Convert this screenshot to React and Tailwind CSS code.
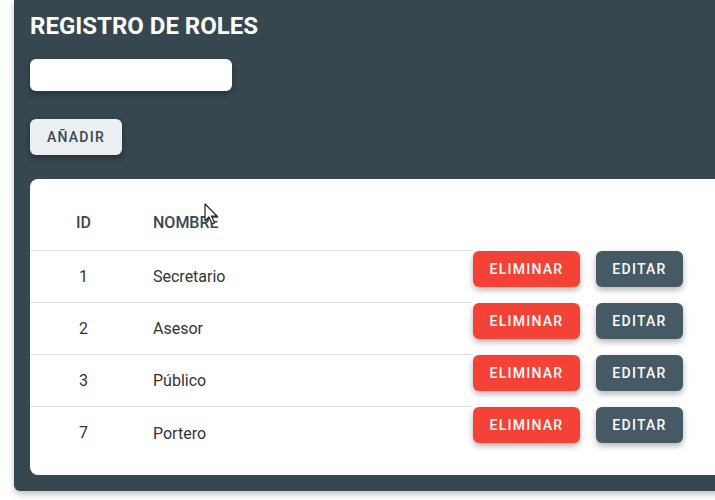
import React from "react";

const roles = [
  { id: 1, nombre: "Secretario" },
  { id: 2, nombre: "Asesor" },
  { id: 3, nombre: "Público" },
  { id: 7, nombre: "Portero" },
];

function Cursor() {
  return (
    <svg
      className="absolute left-[204px] top-[203px]"
      width="16"
      height="24"
      viewBox="0 0 16 24"
    >
      <path
        d="M1 1 L1 18 L5 14 L8 21 L10.5 20 L7.5 13 L13 13 Z"
        fill="#fff"
        stroke="#222"
        strokeWidth="1.2"
        strokeLinejoin="round"
      />
    </svg>
  );
}

function App() {
  return (
    <div className="relative w-[715px] h-[500px] overflow-hidden bg-white font-['Roboto',sans-serif]">
      <div className="ml-[14px] w-[760px] bg-[#37474f] rounded-bl-md shadow-[0_3px_6px_rgba(0,0,0,0.25)] pl-4 pt-[14px] pb-4">
        <h1 className="text-white font-bold text-[24px] leading-[24px]">
          REGISTRO DE ROLES
        </h1>
        <input
          type="text"
          className="mt-[21px] block w-[202px] h-8 rounded-md bg-white shadow-[0_3px_6px_rgba(0,0,0,0.3)] outline-none px-2"
        />
        <button className="mt-7 h-9 px-[17px] rounded-md bg-[#eceff1] text-[#37474f] text-sm font-medium tracking-[1.25px] shadow-[0_3px_6px_rgba(0,0,0,0.35)]">
          AÑADIR
        </button>
        <div className="mt-6 bg-white rounded-l-lg pt-4 pb-4">
          <div className="flex h-[56px] items-center border-b border-[#e0e0e0] w-[442px] text-[#37474f] text-base font-medium">
            <div className="w-[107px] text-center">ID</div>
            <div className="pl-4">NOMBRE</div>
          </div>
          {roles.map((r, i) => (
            <div key={r.id} className="flex h-[52px]">
              <div
                className={
                  "flex items-center w-[442px] text-[#333] text-base " +
                  (i < roles.length - 1 ? "border-b border-[#e0e0e0]" : "")
                }
              >
                <div className="w-[107px] text-center">{r.id}</div>
                <div className="pl-4 pt-[1px]">{r.nombre}</div>
              </div>
              <div className="flex gap-4 pl-[1px]">
                <button className="h-9 w-[107px] rounded-md bg-[#f44336] text-white text-sm font-medium tracking-[1.25px] shadow-[0_3px_6px_rgba(0,0,0,0.3)]">
                  ELIMINAR
                </button>
                <button className="h-9 w-[87px] rounded-md bg-[#455a64] text-white text-sm font-medium tracking-[1.25px] shadow-[0_3px_6px_rgba(0,0,0,0.3)]">
                  EDITAR
                </button>
              </div>
            </div>
          ))}
        </div>
      </div>
      <Cursor />
    </div>
  );
}

export default App;
